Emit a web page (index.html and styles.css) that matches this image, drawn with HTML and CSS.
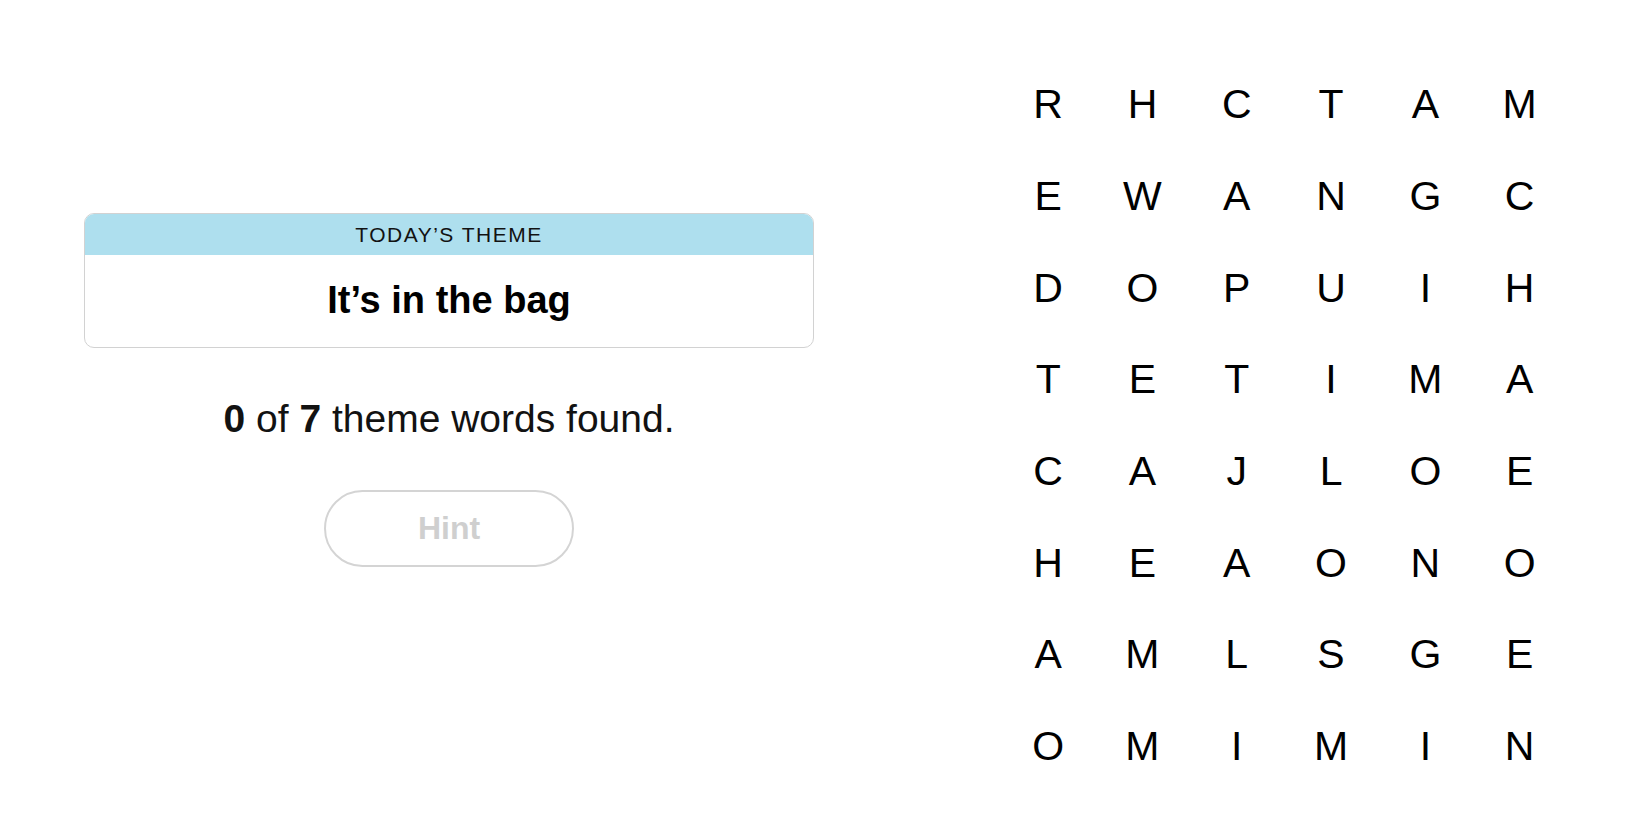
FILE: index.html
```
<!DOCTYPE html>
<html lang="en">
<head>
<meta charset="utf-8">
<title>Strands</title>
<link rel="stylesheet" href="styles.css">
</head>
<body>
<main class="page">
  <section class="info">
    <div class="theme-card">
      <div class="theme-label">TODAY’S THEME</div>
      <div class="theme-title">It’s in the bag</div>
    </div>
    <p class="progress"><b>0</b> of <b>7</b> theme words found.</p>
    <button class="hint" type="button" disabled>Hint</button>
  </section>
  <section class="board">
    <span>R</span><span>H</span><span>C</span><span>T</span><span>A</span><span>M</span>
    <span>E</span><span>W</span><span>A</span><span>N</span><span>G</span><span>C</span>
    <span>D</span><span>O</span><span>P</span><span>U</span><span>I</span><span>H</span>
    <span>T</span><span>E</span><span>T</span><span>I</span><span>M</span><span>A</span>
    <span>C</span><span>A</span><span>J</span><span>L</span><span>O</span><span>E</span>
    <span>H</span><span>E</span><span>A</span><span>O</span><span>N</span><span>O</span>
    <span>A</span><span>M</span><span>L</span><span>S</span><span>G</span><span>E</span>
    <span>O</span><span>M</span><span>I</span><span>M</span><span>I</span><span>N</span>
  </section>
</main>
</body>
</html>
```

FILE: styles.css
```
html, body {
  margin: 0;
  padding: 0;
  background: #ffffff;
  color: #000000;
  font-family: "Liberation Sans", Arial, sans-serif;
}

.page {
  display: flex;
  align-items: flex-start;
  padding-left: 84px;
  gap: 187px;
}

.info {
  width: 730px;
  padding-top: 213px;
  display: flex;
  flex-direction: column;
  align-items: center;
}

.theme-card {
  width: 100%;
  box-sizing: border-box;
  border: 1px solid #d2d2d2;
  border-radius: 10px;
  overflow: hidden;
  height: 135px;
  display: flex;
  flex-direction: column;
}

.theme-label {
  background: #aedfee;
  height: 40px;
  display: flex;
  align-items: center;
  justify-content: center;
  font-size: 21px;
  letter-spacing: 1.5px;
  font-weight: 400;
  color: #121212;
  padding-top: 1px;
}

.theme-title {
  flex: 1;
  display: flex;
  align-items: center;
  justify-content: center;
  font-size: 38px;
  font-weight: 700;
  letter-spacing: 0;
  padding-bottom: 2px;
}

.progress {
  margin: 49px 0 0;
  font-size: 39px;
  line-height: 44px;
  color: #121212;
  letter-spacing: 0;
}

.progress b {
  font-weight: 700;
}

.hint {
  margin-top: 49px;
  width: 250px;
  height: 77px;
  border: 2px solid #d4d4d4;
  border-radius: 40px;
  background: #ffffff;
  color: #cfcfcf;
  font-family: "Liberation Sans", Arial, sans-serif;
  font-size: 32px;
  font-weight: 700;
  letter-spacing: 0;
}

.board {
  margin-top: 59px;
  display: grid;
  grid-template-columns: repeat(6, 94.3px);
  grid-template-rows: repeat(8, 91.7px);
}

.board span {
  display: flex;
  align-items: center;
  justify-content: center;
  font-size: 41px;
  font-weight: 400;
  color: #000000;
}
```
